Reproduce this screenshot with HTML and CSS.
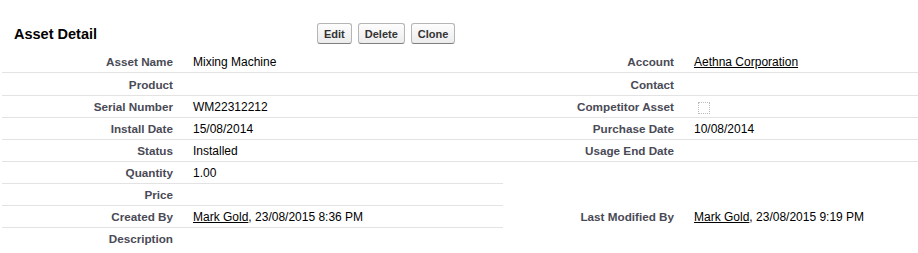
FILE: index.html
```html
<!DOCTYPE html>
<html lang="en">
  <head>
    <meta charset="UTF-8" />
    <meta name="viewport" content="width=device-width, initial-scale=1.0" />
    <title>Asset Detail</title>
    <link rel="stylesheet" href="styles.css">
  </head>
  <body>
    <div class="page-block">
      <div class="pb-header">
        <h2 class="pb-title">Asset Detail</h2>
        <div class="pb-buttons">
          <button class="btn" type="button">Edit</button>
          <button class="btn" type="button">Delete</button>
          <button class="btn" type="button">Clone</button>
        </div>
      </div>
      <table class="detail-list">
        <colgroup>
          <col class="label-w" />
          <col class="data-w" />
          <col class="label2-w" />
          <col />
        </colgroup>
        <tr>
          <td class="label-col">Asset Name</td>
          <td class="data-col">Mixing Machine</td>
          <td class="label-col">Account</td>
          <td class="data-col"><a href="#">Aethna Corporation</a></td>
        </tr>
        <tr class="tall">
          <td class="label-col">Product</td>
          <td class="data-col"></td>
          <td class="label-col">Contact</td>
          <td class="data-col"></td>
        </tr>
        <tr>
          <td class="label-col">Serial Number</td>
          <td class="data-col">WM22312212</td>
          <td class="label-col">Competitor Asset</td>
          <td class="data-col"><span class="checkbox"></span></td>
        </tr>
        <tr>
          <td class="label-col">Install Date</td>
          <td class="data-col">15/08/2014</td>
          <td class="label-col">Purchase Date</td>
          <td class="data-col">10/08/2014</td>
        </tr>
        <tr>
          <td class="label-col">Status</td>
          <td class="data-col">Installed</td>
          <td class="label-col">Usage End Date</td>
          <td class="data-col"></td>
        </tr>
        <tr>
          <td class="label-col">Quantity</td>
          <td class="data-col">1.00</td>
          <td class="empty"></td>
          <td class="empty"></td>
        </tr>
        <tr>
          <td class="label-col">Price</td>
          <td class="data-col"></td>
          <td class="empty"></td>
          <td class="empty"></td>
        </tr>
        <tr>
          <td class="label-col">Created By</td>
          <td class="data-col"><a href="#">Mark Gold</a>, 23/08/2015 8:36 PM</td>
          <td class="label-col empty">Last Modified By</td>
          <td class="data-col empty"><a href="#">Mark Gold</a>, 23/08/2015 9:19 PM</td>
        </tr>
        <tr class="last">
          <td class="label-col">Description</td>
          <td class="data-col"></td>
          <td class="empty"></td>
          <td class="empty"></td>
        </tr>
      </table>
    </div>
  </body>
</html>
```

FILE: styles.css
```css
body {
  font-family: Arial, "Liberation Sans", sans-serif;
  font-size: 12px;
  color: #000;
  margin: 0;
  background-color: #fff;
}
.page-block {
  padding-left: 2px;
}
.pb-header {
  display: flex;
  align-items: center;
  height: 51px;
  padding-top: 16px;
  box-sizing: border-box;
}
.pb-title {
  width: 313px;
  margin: 0;
  padding-left: 12px;
  box-sizing: border-box;
  font-size: 14.5px;
  font-weight: bold;
  color: #000;
}
.pb-buttons {
  display: flex;
  gap: 6px;
  margin-left: 2px;
}
.btn {
  height: 21px;
  padding: 0 6px;
  font-family: Arial, "Liberation Sans", sans-serif;
  font-size: 11px;
  font-weight: bold;
  color: #333;
  border: 1px solid #b5b5b5;
  border-bottom-color: #7f7f7f;
  border-radius: 3px;
  background: linear-gradient(#fdfdfd, #ececec);
  cursor: pointer;
}
.detail-list {
  width: 916px;
  border-collapse: collapse;
  table-layout: fixed;
}
.label-w {
  width: 181px;
}
.data-w {
  width: 320px;
}
.label2-w {
  width: 181px;
}
.detail-list td {
  height: 21px;
  padding: 0;
  border-bottom: 1px solid #e3e3e3;
  vertical-align: middle;
  white-space: nowrap;
}
.detail-list tr.tall td {
  height: 22px;
}
.detail-list td.empty {
  border-bottom-color: transparent;
}
.detail-list tr.last td {
  border-bottom-color: transparent;
}
.label-col {
  text-align: right;
  padding-right: 10px !important;
  font-size: 11.7px;
  font-weight: bold;
  color: #4a4a56;
}
.data-col {
  padding-left: 10px !important;
}
.data-col a {
  color: #000;
  text-decoration: underline;
}
.checkbox {
  display: inline-block;
  width: 10px;
  height: 10px;
  margin-left: 4px;
  margin-top: 3px;
  border: 1px dotted #bdbdbd;
  vertical-align: middle;
}
```
